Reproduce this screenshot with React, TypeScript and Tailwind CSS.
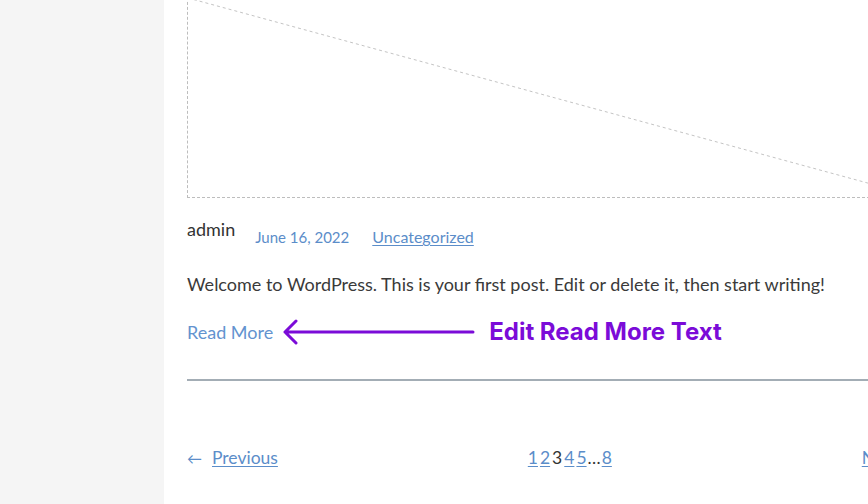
export default function App() {
  const pages = ["1", "2", "3", "4", "5"];

  return (
    <div className="flex h-screen overflow-hidden bg-white font-['Lato',sans-serif]">
      <aside className="w-[164px] shrink-0 bg-[#f5f5f5]" />

      <main className="shrink-0 pl-[23px]">
        <div className="flex w-[733px] flex-col">
          {/* featured image placeholder */}
          <div className="relative -mt-[3px] h-[201px] w-full border border-dashed border-[#bdbdbd]">
            <svg className="absolute inset-0 h-full w-full" preserveAspectRatio="none">
              <line x1="0" y1="0" x2="100%" y2="100%" stroke="#c4c4c4" strokeWidth="1" strokeDasharray="3 3" />
            </svg>
          </div>

          <div className="mt-[19px] flex items-start">
            <span className="text-[18px] leading-[24px] text-[#333]">admin</span>
            <span className="ml-[20px] mt-[8px] text-[15px] leading-[24px] text-[#5b8dc9]">June 16, 2022</span>
            <a href="#" className="ml-[23px] mt-[8px] text-[16px] leading-[24px] text-[#5b8dc9] underline underline-offset-2">
              Uncategorized
            </a>
          </div>

          <p className="mt-[23px] text-[18px] leading-[24px] text-[#3a3a3a]">
            Welcome to WordPress. This is your first post. Edit or delete it, then start writing!
          </p>

          <div className="mt-[23px] flex items-center">
            <a href="#" className="text-[18px] leading-[24px] text-[#6393cf]">Read More</a>
            <svg width="194" height="26" viewBox="0 0 194 26" className="ml-[8px]">
              <path d="M4 13 H192 M15 2 L4 13 L15 24" fill="none" stroke="#7b0bd8" strokeWidth="3" strokeLinecap="round" strokeLinejoin="round" />
            </svg>
            <span className="ml-[14px] font-['Inter',sans-serif] text-[24px] font-bold leading-[24px] text-[#7b0bd8]">
              Edit Read More Text
            </span>
          </div>

          <hr className="mt-[34px] h-[2px] border-0 bg-[#a3adb5]" />

          <nav className="mt-[65px] flex items-center justify-between text-[17.5px] leading-[24px]">
            <div className="flex items-center text-[#5b8dc9]">
              <span className="mr-[10px] text-[15px]">←</span>
              <a href="#" className="underline underline-offset-2">Previous</a>
            </div>
            <div className="flex items-center">
              {pages.map((p) =>
                p === "3" ? (
                  <span key={p} className="px-[1px] text-[#333]">{p}</span>
                ) : (
                  <a key={p} href="#" className="px-[1px] text-[#5b8dc9] underline underline-offset-2">{p}</a>
                )
              )}
              <span className="text-[#333]">…</span>
              <a href="#" className="px-[1px] text-[#5b8dc9] underline underline-offset-2">8</a>
            </div>
            <div className="flex items-center text-[#5b8dc9]">
              <a href="#" className="underline underline-offset-2">Next</a>
              <span className="ml-[6px] text-[15px]">→</span>
            </div>
          </nav>
        </div>
      </main>
    </div>
  );
}
